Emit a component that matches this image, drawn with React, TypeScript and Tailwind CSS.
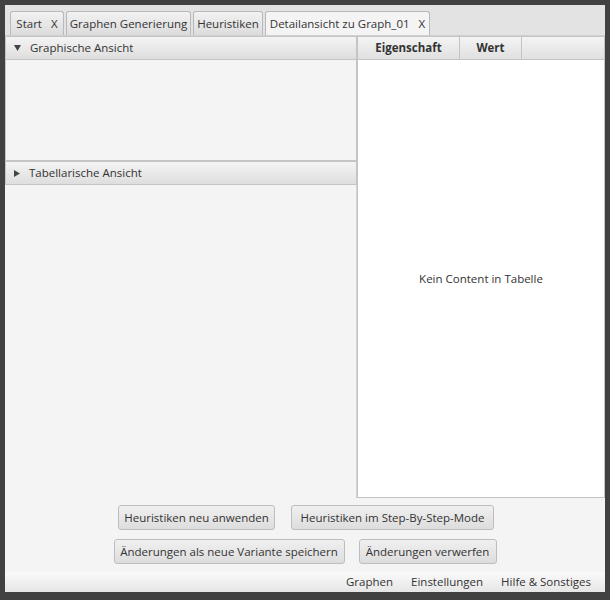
import React from 'react';

const font = { fontFamily: '"Open Sans", "Noto Sans", Arial, sans-serif' };

function Tab({ label, closable, active, w }: { label: string; closable?: boolean; active?: boolean; w: string }) {
  return (
    <div
      className={`flex items-center justify-center h-[24px] ${w} gap-[9px] border border-b-0 border-[#b9b9b9] rounded-t-[3px] text-[11.5px] text-[#333] whitespace-nowrap ${
        active ? 'bg-[#f4f4f4]' : 'bg-gradient-to-b from-[#f2f2f2] to-[#dcdcdc]'
      }`}
    >
      <span>{label}</span>
      {closable && <span>X</span>}
    </div>
  );
}

function PaneHeader({ label, open }: { label: string; open?: boolean }) {
  return (
    <div className="flex items-center h-[24px] pl-[8px] gap-[9px] border border-[#c4c4c4] bg-gradient-to-b from-[#f4f4f4] to-[#dedede] text-[11.5px] text-[#333]">
      {open ? (
        <svg width="7" height="6" viewBox="0 0 7 6">
          <path d="M0 0 H7 L3.5 6 Z" fill="#444" />
        </svg>
      ) : (
        <svg width="6" height="7" viewBox="0 0 6 7">
          <path d="M0 0 V7 L6 3.5 Z" fill="#444" />
        </svg>
      )}
      <span>{label}</span>
    </div>
  );
}

function Btn({ label, w }: { label: string; w: string }) {
  return (
    <div
      className={`flex items-center justify-center h-[25px] ${w} border border-[#bdbdbd] rounded-[3px] bg-gradient-to-b from-[#f0f0f0] to-[#dddddd] text-[11.5px] text-[#333]`}
    >
      {label}
    </div>
  );
}

export default function App() {
  return (
    <div className="w-[610px] h-[600px] bg-[#414141] pt-[5px] pl-[5px] pr-[5px] pb-[8px]" style={font}>
      <div className="flex flex-col w-full h-full bg-[#f4f4f4]">
        {/* tab header */}
        <div className="flex items-end gap-[2px] h-[31px] pl-[5px] bg-[#e3e3e3] border-b border-[#d0d0d0]">
          <Tab label="Start" closable w="w-[54px]" />
          <Tab label="Graphen Generierung" w="w-[125px]" />
          <Tab label="Heuristiken" w="w-[70px]" />
          <Tab label="Detailansicht zu Graph_01" closable active w="w-[165px]" />
        </div>

        <div className="flex h-[462px]">
          {/* left accordion */}
          <div className="flex flex-col w-[352px]">
            <PaneHeader label="Graphische Ansicht" open />
            <div className="h-[101px] border-x border-b border-[#c4c4c4] bg-[#f4f4f4]" />
            <PaneHeader label="Tabellarische Ansicht" />
            <div className="flex-1 border-r border-[#d4d4d4]" />
          </div>

          {/* property table */}
          <div className="flex flex-col flex-1 border border-[#c4c4c4] bg-white">
            <div className="flex h-[23px] bg-gradient-to-b from-[#f4f4f4] to-[#e0e0e0] border-b border-[#c4c4c4] text-[11.5px] font-bold text-[#333]">
              <div className="flex items-center justify-center w-[102px] border-r border-[#c4c4c4]">Eigenschaft</div>
              <div className="flex items-center justify-center w-[62px] border-r border-[#c4c4c4]">Wert</div>
            </div>
            <div className="flex flex-1 items-center justify-center text-[11.5px] text-[#333]">Kein Content in Tabelle</div>
          </div>
        </div>

        {/* action buttons */}
        <div className="flex flex-col items-center gap-[9px] pt-[7px] h-[74px]">
          <div className="flex gap-[16px] pl-[2px]">
            <Btn label="Heuristiken neu anwenden" w="w-[157px]" />
            <Btn label="Heuristiken im Step-By-Step-Mode" w="w-[203px]" />
          </div>
          <div className="flex gap-[14px]">
            <Btn label="Änderungen als neue Variante speichern" w="w-[231px]" />
            <Btn label="Änderungen verwerfen" w="w-[138px]" />
          </div>
        </div>

        {/* menu bar */}
        <div className="flex flex-1 items-center justify-end gap-[18px] pr-[14px] bg-gradient-to-b from-[#fafafa] to-[#e6e6e6] text-[11.5px] text-[#333]">
          <span>Graphen</span>
          <span>Einstellungen</span>
          <span>Hilfe &amp; Sonstiges</span>
        </div>
      </div>
    </div>
  );
}
